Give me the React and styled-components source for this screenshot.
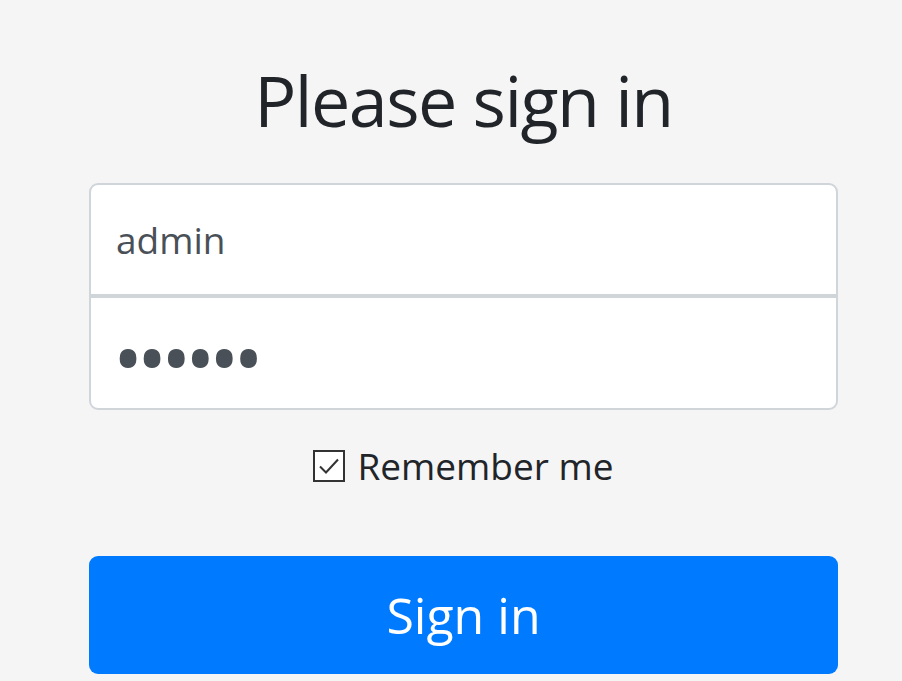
import React from 'react';
import styled, { createGlobalStyle } from 'styled-components';

const GlobalStyle = createGlobalStyle`
  html, body {
    margin: 0;
    padding: 0;
    background: #f5f5f5;
  }
  body {
    font-family: 'Open Sans', 'Noto Sans', sans-serif;
    color: #212529;
  }
`;

const Page = styled.div`
  width: 902px;
  height: 681px;
  overflow: hidden;
  padding-left: 89px;
  box-sizing: border-box;
`;

const Form = styled.form`
  width: 749px;
  display: flex;
  flex-direction: column;
  padding-top: 48px;
`;

const Heading = styled.h1`
  margin: 0 0 30px;
  font-size: 70px;
  font-weight: 400;
  letter-spacing: -1.5px;
  line-height: 105px;
  text-align: center;
  color: #212529;
`;

const Field = styled.input`
  box-sizing: border-box;
  width: 100%;
  height: ${(props) => (props.first ? '113px' : '114px')};
  margin: 0;
  padding: 0 25px;
  border: 2px solid #d0d5da;
  border-radius: ${(props) => (props.first ? '9px 9px 0 0' : '0 0 9px 9px')};
  background: #fff;
  font-family: 'Open Sans', 'Noto Sans', sans-serif;
  font-size: 37px;
  color: #495057;
  outline: none;
`;

const Secret = styled(Field)`
  padding: 6px 22px 0;
  font-size: 80px;
  letter-spacing: -6px;
`;

const CheckRow = styled.label`
  display: flex;
  align-items: center;
  justify-content: center;
  gap: 12px;
  margin-top: 30px;
  font-size: 37px;
  line-height: 52px;
  color: #212529;
`;

const Box = styled.span`
  box-sizing: border-box;
  width: 32px;
  height: 32px;
  border: 2px solid #333;
  background: #fff;
  display: flex;
  align-items: center;
  justify-content: center;
`;

const Button = styled.button`
  box-sizing: border-box;
  margin-top: 64px;
  width: 100%;
  height: 118px;
  border: none;
  border-radius: 9px;
  background: #007bff;
  color: #fff;
  font-family: 'Open Sans', 'Noto Sans', sans-serif;
  font-size: 50px;
  cursor: pointer;
`;

export default function App() {
  return (
    <Page>
      <GlobalStyle />
      <Form onSubmit={(e) => e.preventDefault()}>
        <Heading>Please sign in</Heading>
        <Field first type="text" defaultValue="admin" />
        <Secret type="password" defaultValue="123456" />
        <CheckRow>
          <Box>
            <svg width="24" height="24" viewBox="0 0 24 24">
              <path d="M3 12.5 L9 18.5 L21 5.5" fill="none" stroke="#333" strokeWidth="2" />
            </svg>
          </Box>
          Remember me
        </CheckRow>
        <Button type="submit">Sign in</Button>
      </Form>
    </Page>
  );
}
